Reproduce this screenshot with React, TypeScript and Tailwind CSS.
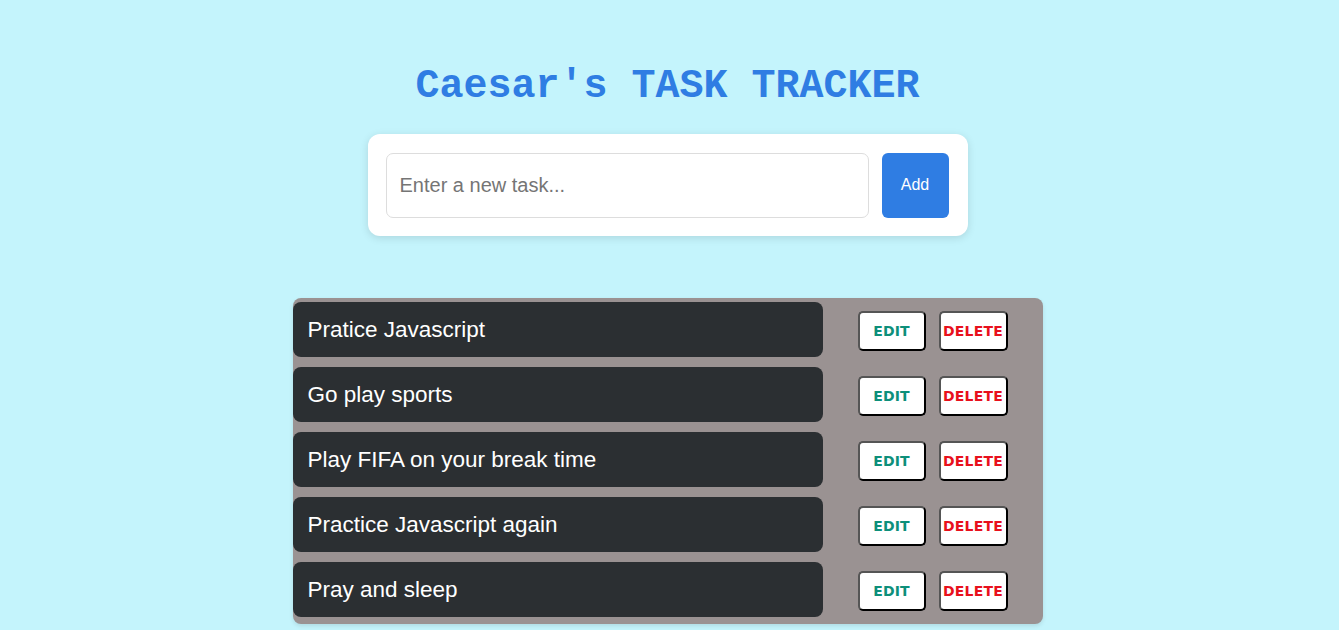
const tasks = [
  "Pratice Javascript",
  "Go play sports",
  "Play FIFA on your break time",
  "Practice Javascript again",
  "Pray and sleep",
];

function TaskRow({ text }: { text: string }) {
  return (
    <div className="flex items-center">
      <div className="w-[530px] h-[55px] flex items-center pl-[15px] rounded-[8px] bg-[#2b2f32] text-white text-[22.5px]">
        {text}
      </div>
      <div className="flex-1 flex justify-center items-center gap-[13px] pt-[3px]">
        <button className="w-[68px] h-[40px] bg-white rounded-[5px] border-2 border-[#555] border-b-black border-r-black text-[#0d8f7a] font-bold text-[14px] tracking-[0.2px] font-['DejaVu_Sans',Verdana,sans-serif]">
          EDIT
        </button>
        <button className="w-[69px] h-[40px] bg-white rounded-[5px] border-2 border-[#555] border-b-black border-r-black text-[#e8101c] font-bold text-[14px] tracking-[0.2px] font-['DejaVu_Sans',Verdana,sans-serif]">
          DELETE
        </button>
      </div>
    </div>
  );
}

export default function App() {
  return (
    <div className="min-h-[630px] bg-[#c4f4fc] font-['Liberation_Sans',Arial,sans-serif] flex flex-col items-center pt-[63px] pr-[4px]">
      <h1 className="font-['Liberation_Mono','Courier_New',monospace] font-bold text-[40px] leading-[48px] text-[#2f7de3]">
        Caesar's TASK TRACKER
      </h1>

      <div className="mt-[23px] w-[600px] h-[102px] bg-white rounded-[12px] shadow-[0_2px_8px_rgba(0,0,0,0.12)] flex items-center gap-[13px] px-[18px]">
        <input
          type="text"
          placeholder="Enter a new task..."
          className="w-[483px] h-[65px] border border-[#ddd] rounded-[7px] px-[13px] text-[20px] placeholder:text-[#757575] outline-none"
        />
        <button className="w-[67px] h-[65px] bg-[#2f7de3] text-white text-[16px] rounded-[6px]">
          Add
        </button>
      </div>

      <div className="mt-[62px] w-[750px] bg-[#9a9292] rounded-[8px] pt-[4px] pb-[7px] flex flex-col gap-[10px] shadow-[0_2px_4px_rgba(0,0,0,0.1)]">
        {tasks.map((t) => (
          <TaskRow key={t} text={t} />
        ))}
      </div>
    </div>
  );
}
